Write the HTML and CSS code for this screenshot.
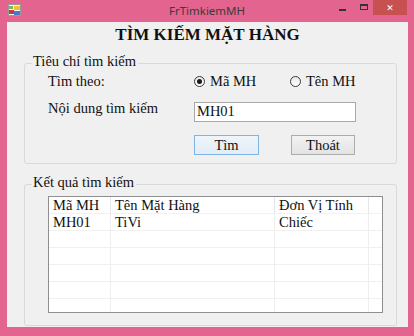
FILE: index.html
```html
<!DOCTYPE html>
<html>
<head>
<meta charset="utf-8">
<title>FrTimkiemMH</title>
<link rel="stylesheet" href="styles.css">
</head>
<body>
<div class="window">
  <div class="titlebar">
    <div class="tb-left">
      <svg class="appicon" width="13" height="12" viewBox="0 0 13 12">
        <rect x="0.5" y="0.5" width="12" height="11" fill="#f4f4f4" stroke="#9a9a9a"/>
        <rect x="6" y="2" width="6" height="4" fill="#f2c230"/>
        <rect x="1" y="6" width="5" height="4" fill="#c43c3c"/>
        <rect x="6" y="7" width="6" height="4" fill="#4a78c8"/>
        <rect x="1" y="2" width="4" height="3" fill="#8ab060"/>
      </svg>
    </div>
    <div class="title">FrTimkiemMH</div>
    <div class="controls">
      <span class="ctl min"><span class="min-bar"></span></span>
      <span class="ctl max"><span class="max-box"></span></span>
      <span class="ctl close">✕</span>
    </div>
  </div>
  <div class="client">
    <h1 class="heading">TÌM KIẾM MẶT HÀNG</h1>
    <fieldset class="group g1">
      <legend class="legend">Tiêu chí tìm kiếm</legend>
      <div class="form">
        <span class="lbl r1">Tìm theo:</span>
        <label class="radio r1"><span class="circle checked"></span>Mã MH</label>
        <label class="radio r1"><span class="circle"></span>Tên MH</label>
        <span class="lbl r2">Nội dung tìm kiếm</span>
        <div class="input r2">MH01</div>
        <span class="btn focus r3">Tìm</span>
        <span class="btn r3">Thoát</span>
      </div>
    </fieldset>
    <fieldset class="group g2">
      <legend class="legend">Kết quả tìm kiếm</legend>
      <div class="results">
        <div class="list">
          <div class="cell hd">Mã MH</div><div class="cell hd">Tên Mặt Hàng</div><div class="cell hd">Đơn Vị Tính</div><div class="cell hd last"></div>
          <div class="cell">MH01</div><div class="cell">TiVi</div><div class="cell">Chiếc</div><div class="cell last"></div>
          <div class="cell"></div><div class="cell"></div><div class="cell"></div><div class="cell last"></div>
          <div class="cell"></div><div class="cell"></div><div class="cell"></div><div class="cell last"></div>
          <div class="cell"></div><div class="cell"></div><div class="cell"></div><div class="cell last"></div>
          <div class="cell"></div><div class="cell"></div><div class="cell"></div><div class="cell last"></div>
          <div class="cell"></div><div class="cell"></div><div class="cell"></div><div class="cell last"></div>
        </div>
      </div>
    </fieldset>
  </div>
</div>
</body>
</html>
```

FILE: styles.css
```css
* { box-sizing: border-box; }
html, body { margin: 0; padding: 0; }
body { width: 414px; height: 336px; overflow: hidden; background: #e2648f; }

.window {
  width: 414px;
  height: 336px;
  background: #e2648f;
  display: flex;
  flex-direction: column;
}

.titlebar {
  height: 22px;
  display: grid;
  grid-template-columns: 1fr auto 1fr;
  align-items: start;
}
.tb-left { padding: 4px 0 0 8px; }
.appicon { display: block; }
.title {
  font: 11.5px "Noto Sans", sans-serif;
  color: #3b3b3b;
  line-height: 22px;
}
.controls {
  display: flex;
  justify-content: flex-end;
  padding-right: 7px;
}
.ctl { display: flex; }
.min { width: 26px; justify-content: center; padding-top: 9px; }
.min-bar { width: 7px; height: 2px; background: #333; }
.max { width: 18px; justify-content: center; padding-top: 4px; }
.max-box { width: 8px; height: 6px; border: 1px solid #333; border-top-width: 2px; }
.close {
  width: 34px;
  height: 15px;
  background: #c75050;
  color: #fff;
  font: bold 9px "DejaVu Sans", sans-serif;
  align-items: center;
  justify-content: center;
}

.client {
  margin: 0 6px 0 7px;
  height: 305px;
  background: #f0f0f0;
  display: flex;
  flex-direction: column;
  font-family: "Liberation Serif", "Times New Roman", serif;
  font-size: 14.5px;
  color: #111;
}

.heading {
  margin: 0;
  padding-top: 3px;
  font-size: 17px;
  line-height: 20px;
  font-weight: bold;
  text-align: center;
  color: #111;
}

.group {
  margin: 0 11px 0 17px;
  padding: 0;
  border: 1px solid #d9d9d9;
  border-radius: 3px;
  min-width: 0;
}
.legend {
  margin-left: 7px;
  padding: 0 2px 4px 1px;
  line-height: 16px;
  color: #111;
}
.g1 { margin-top: 8px; }
.g2 { margin-top: 10px; }

.form {
  display: grid;
  grid-template-columns: 146px 96px auto;
  grid-template-rows: 16px 22px 20px;
  row-gap: 11px;
  line-height: 16px;
  padding: 0 0 10px 23px;
}
.lbl { white-space: nowrap; }
.radio { display: flex; align-items: center; gap: 5px; }
.circle {
  width: 11px;
  height: 11px;
  border-radius: 50%;
  border: 1px solid #3a3a3a;
  background: linear-gradient(#e8e8e8, #fff);
  display: flex;
  align-items: center;
  justify-content: center;
}
.circle.checked::after {
  content: "";
  width: 5px;
  height: 5px;
  border-radius: 50%;
  background: #1a1a1a;
}
.form .r2 { grid-row: 2; }
.form .r3 { grid-row: 3; }
.input {
  grid-column: 2 / 4;
  margin-top: 2px;
  width: 162px;
  height: 20px;
  background: #fff;
  border: 1px solid #a9a9a9;
  padding: 0 0 0 2px;
  line-height: 17px;
}
.btn {
  height: 20px;
  line-height: 18px;
  text-align: center;
  border: 1px solid #acacac;
  background: linear-gradient(#f2f2f2, #e3e3e3);
  margin-top: 2px;
}
.btn.focus {
  grid-column: 2;
  width: 65px;
  border-color: #7fb4e6;
  background: linear-gradient(#eef5fb, #e3edf7);
}
.btn:not(.focus) { grid-column: 3; width: 64px; margin-left: 1px; }

.results { padding: 2px 0 12px 23px; }
.list {
  width: 335px;
  height: 117px;
  border: 1px solid #8f8f8f;
  background: #fff;
  display: grid;
  grid-template-columns: 62px 164px 94px 13px;
  grid-auto-rows: 17px;
  overflow: hidden;
  line-height: 16px;
}
.cell {
  border-right: 1px solid #eeeeee;
  border-bottom: 1px solid #f0f0f0;
  padding-left: 4px;
  white-space: nowrap;
}
.cell.hd { border-right-color: #e6e6e6; border-bottom-color: #f2f2f2; }
.cell.last { border-right: none; }
```
